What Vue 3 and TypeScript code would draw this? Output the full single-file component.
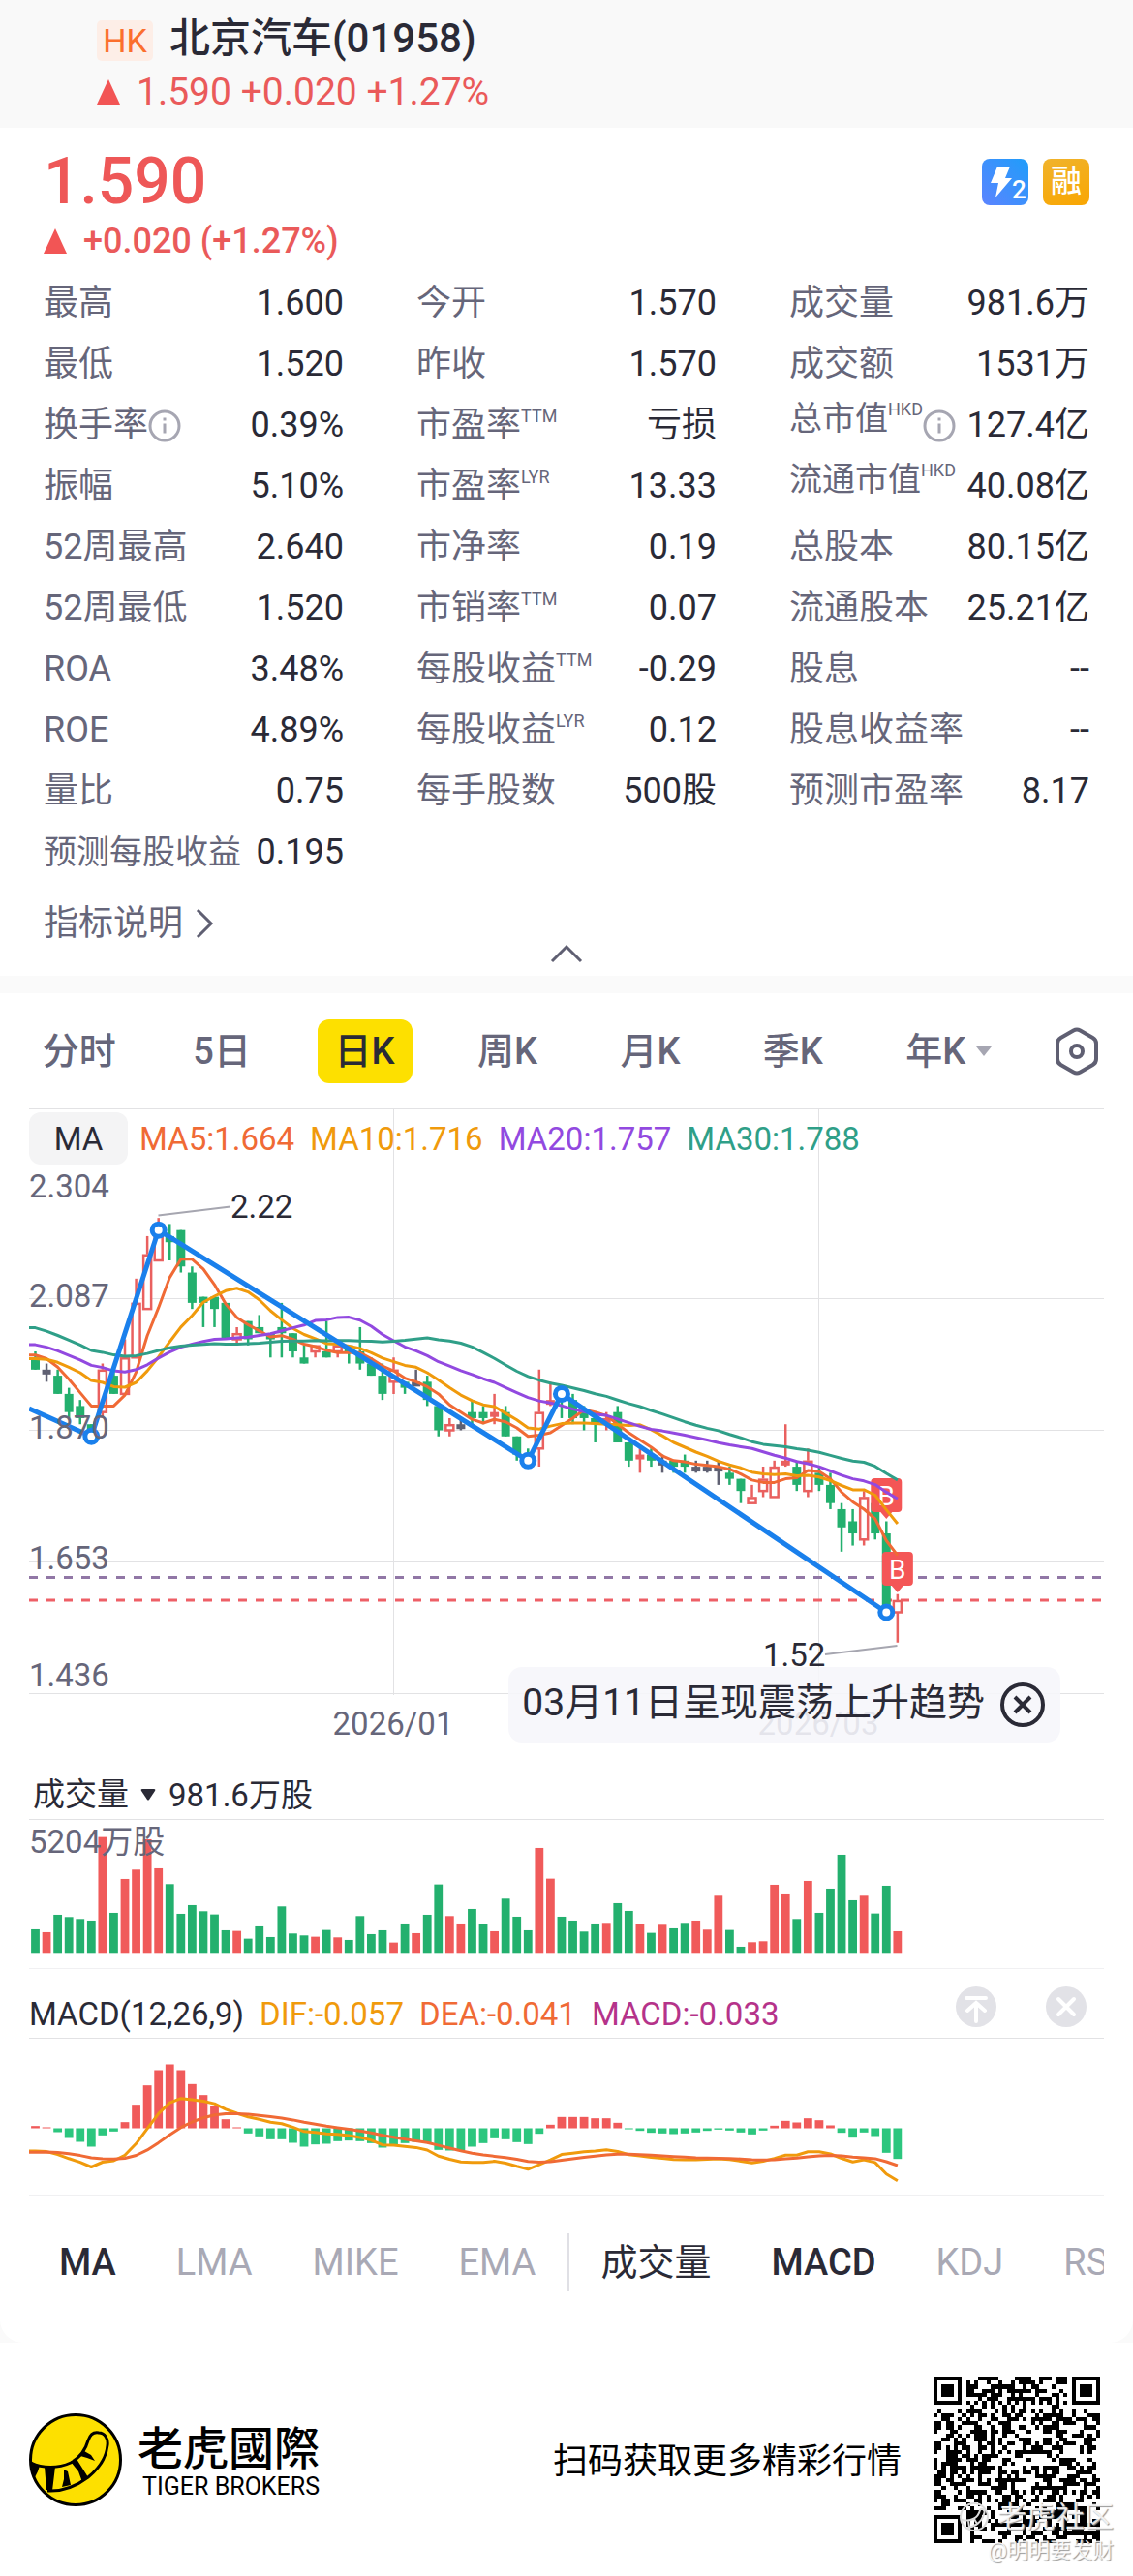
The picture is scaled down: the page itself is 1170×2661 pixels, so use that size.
<script setup lang="ts">
type Kind = 'u' | 'd' | 'f'
type Candle = [Kind, number, number, number, number]

interface Stat {
  label: string
  value: string
  sup?: string
  info?: boolean
  compact?: boolean
  raised?: boolean
}

const stats: Stat[] = [
  { label: '最高', value: '1.600' },
  { label: '今开', value: '1.570' },
  { label: '成交量', value: '981.6万' },
  { label: '最低', value: '1.520' },
  { label: '昨收', value: '1.570' },
  { label: '成交额', value: '1531万' },
  { label: '换手率', value: '0.39%', info: true },
  { label: '市盈率', value: '亏损', sup: 'TTM' },
  { label: '总市值', value: '127.4亿', sup: 'HKD', info: true, compact: true, raised: true },
  { label: '振幅', value: '5.10%' },
  { label: '市盈率', value: '13.33', sup: 'LYR' },
  { label: '流通市值', value: '40.08亿', sup: 'HKD', compact: true, raised: true },
  { label: '52周最高', value: '2.640' },
  { label: '市净率', value: '0.19' },
  { label: '总股本', value: '80.15亿' },
  { label: '52周最低', value: '1.520' },
  { label: '市销率', value: '0.07', sup: 'TTM' },
  { label: '流通股本', value: '25.21亿' },
  { label: 'ROA', value: '3.48%' },
  { label: '每股收益', value: '-0.29', sup: 'TTM' },
  { label: '股息', value: '--' },
  { label: 'ROE', value: '4.89%' },
  { label: '每股收益', value: '0.12', sup: 'LYR' },
  { label: '股息收益率', value: '--' },
  { label: '量比', value: '0.75' },
  { label: '每手股数', value: '500股' },
  { label: '预测市盈率', value: '8.17' },
  { label: '预测每股收益', value: '0.195', compact: true },
]

const periods = ['分时', '5日', '日K', '周K', '月K', '季K']

// kind (up / down / flat), open, close, high, low — in cents
const candles: Candle[] = [
  ['d', 199, 197, 200, 197], ['f', 197, 197, 198, 195], ['d', 196, 193, 197, 193], ['d', 193, 190, 194, 189],
  ['d', 191, 189, 192, 188], ['d', 188, 186, 188, 186], ['u', 190, 197, 198, 189], ['d', 196, 193, 197, 193],
  ['u', 193, 199, 202, 193], ['u', 199, 208, 212, 199], ['u', 207, 216, 219, 207], ['u', 215, 220, 222, 215],
  ['d', 219, 218, 221, 215], ['d', 220, 214, 220, 213], ['d', 213, 208, 214, 207], ['d', 209, 208, 209, 204],
  ['d', 209, 207, 209, 204], ['d', 208, 202, 208, 202], ['u', 202, 203, 204, 201], ['d', 205, 202, 205, 201],
  ['d', 204, 203, 206, 203], ['d', 203, 202, 203, 199], ['d', 204, 203, 208, 199], ['d', 203, 200, 203, 199],
  ['d', 199, 198, 201, 198], ['u', 200, 201, 201, 199], ['d', 200, 199, 205, 199], ['u', 200, 201, 201, 199],
  ['d', 201, 200, 201, 198], ['d', 200, 198, 204, 197], ['d', 198, 196, 199, 196], ['d', 196, 193, 198, 192],
  ['u', 195, 197, 199, 193], ['d', 195, 194, 195, 193], ['f', 195, 195, 197, 195], ['d', 195, 192, 196, 191],
  ['d', 191, 187, 191, 186], ['u', 187, 188, 189, 186], ['f', 188, 188, 189, 187], ['d', 190, 189, 192, 188],
  ['d', 190, 189, 191, 188], ['u', 190, 190, 193, 188], ['d', 190, 186, 191, 186], ['d', 186, 183, 186, 182],
  ['d', 183, 182, 184, 181], ['u', 184, 190, 197, 181], ['u', 192, 192, 195, 191], ['d', 193, 192, 194, 189],
  ['d', 192, 189, 193, 188], ['d', 190, 189, 191, 187], ['d', 189, 188, 190, 185], ['u', 189, 189, 190, 187],
  ['d', 190, 185, 191, 185], ['d', 185, 182, 185, 181], ['u', 183, 183, 184, 180], ['d', 183, 182, 184, 181],
  ['f', 182, 182, 183, 180], ['d', 182, 181, 182, 180], ['d', 182, 181, 183, 180], ['f', 181, 181, 182, 180],
  ['f', 181, 181, 182, 180], ['f', 181, 181, 182, 178], ['d', 180, 179, 181, 178], ['d', 179, 177, 179, 175],
  ['u', 175, 176, 178, 175], ['u', 177, 179, 181, 176], ['u', 176, 181, 182, 176], ['u', 182, 182, 188, 181],
  ['d', 181, 178, 182, 177], ['u', 177, 182, 184, 176], ['d', 180, 178, 181, 177], ['d', 178, 175, 180, 174],
  ['d', 174, 171, 175, 167], ['d', 172, 170, 174, 168], ['u', 169, 176, 177, 168], ['d', 175, 170, 176, 169],
  ['d', 170, 157, 172, 157], ['u', 157, 159, 160, 152],
]

// closes of the sessions before the visible window, oldest first
const history = [
  214, 214, 213, 213, 213, 206, 206, 206, 205, 205, 205, 205, 205, 204, 204,
  204, 204, 203, 200, 200, 198, 198, 198, 198, 199, 200, 200, 200, 200,
]

const volumes = [
  73, 64, 118, 111, 105, 100, 359, 124, 229, 258, 352, 262, 213, 121, 148, 129, 119, 70, 68, 44,
  82, 49, 144, 60, 54, 50, 71, 48, 40, 114, 58, 70, 32, 91, 61, 118, 212, 114, 91, 136,
  88, 67, 168, 112, 70, 325, 230, 112, 100, 66, 91, 93, 154, 130, 88, 62, 87, 76, 93, 100,
  72, 177, 71, 19, 33, 36, 211, 184, 105, 223, 124, 199, 304, 163, 177, 122, 208, 67,
]

const macd = [
  7, 3, -12, -30, -42, -57, -22, -10, 19, 73, 133, 180, 198, 180, 137, 103, 70, 28, 3, -16,
  -25, -34, -34, -45, -57, -50, -48, -40, -38, -40, -46, -60, -50, -46, -42, -46, -67, -69, -68, -57,
  -46, -31, -34, -43, -49, -17, 11, 35, 35, 35, 31, 31, 17, -2, -8, -14, -16, -18, -16, -13,
  -8, -4, -7, -13, -19, -7, 8, 23, 18, 31, 25, 9, -14, -29, -13, -24, -76, -95,
]

const STEP = 11.563
const GREEN = '#23b06e'
const RED = '#f05a5a'
const GREY = '#5f6072'

const x = (i: number): number => 6.5 + i * STEP
const y = (cents: number): number => 60.5 + (230.4 - cents) * 6.267
const strokeOf = (k: Kind): string => (k === 'u' ? '#e9605f' : k === 'd' ? GREEN : GREY)

const bodies = candles.map(([kind, open, close, high, low], i) => {
  const hollow = kind === 'u' && open !== close
  const top = y(Math.max(open, close))
  const height = Math.max(Math.abs(open - close) * 6.267, 5)
  return {
    key: i,
    cx: x(i),
    hollow,
    color: strokeOf(kind),
    top,
    bottom: top + height,
    height,
    high: y(high),
    low: y(low),
  }
})

const closes = [...history, ...candles.map((c) => c[2])]
const average = (span: number): string =>
  [-1, ...candles.keys()]
    .map((i) => {
      const end = Math.max(i, 0) + history.length + 1
      const sum = closes.slice(end - span, end).reduce((a, b) => a + b, 0)
      return `${(i < 0 ? 0 : x(i)).toFixed(1)},${y(sum / span).toFixed(1)}`
    })
    .join(' ')

const averages = [
  { name: 'MA5:1.664', color: '#f06a35', points: average(5) },
  { name: 'MA10:1.716', color: '#f09a0c', points: average(10) },
  { name: 'MA20:1.757', color: '#9249e0', points: average(20) },
  { name: 'MA30:1.788', color: '#2f9f88', points: average(30) },
]

const pivots = [
  { i: 5, p: 186 },
  { i: 11, p: 220 },
  { i: 44, p: 182 },
  { i: 47, p: 193 },
  { i: 76, p: 157 },
].map(({ i, p }) => ({ x: x(i), y: y(p) }))
const trend = ['0,310', ...pivots.map((p) => `${p.x},${p.y}`)].join(' ')

const priceLabels = [
  { text: '2.304', y: 92 },
  { text: '2.087', y: 205 },
  { text: '1.870', y: 341 },
  { text: '1.653', y: 476 },
  { text: '1.436', y: 597 },
]

const buys = [
  { x: x(76), y: 382 },
  { x: x(77), y: 458 },
]

const volumeBars = volumes.map((v, i) => ({
  key: i,
  x: x(i) - 4.4,
  h: v / 3,
  color: candles[i][0] === 'd' ? GREEN : RED,
}))

const ZERO = 93.5
let signal = -75
const deaPoints: string[] = []
const difPoints: string[] = []
const macdBars = macd.map((m, i) => {
  signal += m / 8
  const dea = (ZERO - signal / 3).toFixed(1)
  const dif = (ZERO - (signal + m / 2) / 3).toFixed(1)
  if (i === 0) {
    deaPoints.push(`0,${dea}`)
    difPoints.push(`0,${dif}`)
  }
  deaPoints.push(`${x(i).toFixed(1)},${dea}`)
  difPoints.push(`${x(i).toFixed(1)},${dif}`)
  const h = Math.max(Math.abs(m) / 3, 1)
  return { key: i, x: x(i) - 4.4, y: m > 0 ? ZERO - h : ZERO, h, color: m > 0 ? RED : '#2cc67e' }
})

const mainIndicators = ['MA', 'LMA', 'MIKE', 'EMA']
const subIndicators = ['成交量', 'MACD', 'KDJ', 'RSI']
const activeIndicators = ['MA', '成交量', 'MACD']

const SIZE = 41
const ring = (r: number, c: number, r0: number, c0: number, half: number): number | null => {
  const d = Math.max(Math.abs(r - r0), Math.abs(c - c0))
  return d <= half ? d : null
}
const isDark = (r: number, c: number): boolean => {
  for (const [r0, c0] of [[3, 3], [3, SIZE - 4], [SIZE - 4, 3]]) {
    const d = ring(r, c, r0, c0, 4)
    if (d !== null) return d === 3 || d <= 1
  }
  const a = ring(r, c, SIZE - 7, SIZE - 7, 2)
  if (a !== null) return a !== 1
  if (r === 6) return c % 2 === 0
  if (c === 6) return r % 2 === 0
  let h = Math.imul(r * 73 + 11, 2654435761) ^ Math.imul(c * 151 + 7, 1597334677)
  h = Math.imul(h ^ (h >>> 15), 2246822519)
  h ^= h >>> 13
  return (h & 255) < 130
}
let qrPath = ''
for (let r = 0; r < SIZE; r++) {
  for (let c = 0; c < SIZE; c++) {
    if (isDark(r, c)) qrPath += `M${c} ${r}h1v1h-1z`
  }
}
</script>

<template>
  <div class="page">
    <header class="topbar">
      <div class="topbar-title">
        <span class="market">HK</span>
        <h1>北京汽车(01958)</h1>
      </div>
      <div class="topbar-quote">
        <svg class="triangle" viewBox="0 0 24 26"><path d="M12 0 24 26H0z" fill="#f25555" /></svg>
        <span>1.590 +0.020 +1.27%</span>
      </div>
    </header>

    <section class="quote">
      <div class="price-row">
        <strong class="price">1.590</strong>
        <div class="badges">
          <svg viewBox="0 0 48 48" class="badge" role="img" aria-label="Level 2">
            <defs>
              <linearGradient id="blue" x1="0" y1="1" x2="1" y2="0">
                <stop offset="0" stop-color="#5c84ff" />
                <stop offset="1" stop-color="#1f9dfa" />
              </linearGradient>
            </defs>
            <rect width="48" height="48" rx="8" fill="url(#blue)" />
            <path d="M16 8h13l-5 12h7L14 40l3-15H9z" fill="#fff" />
            <text x="31" y="41" class="badge-num">2</text>
          </svg>
          <span class="badge badge-margin">融</span>
        </div>
      </div>
      <div class="change">
        <svg class="triangle" viewBox="0 0 24 26"><path d="M12 0 24 26H0z" fill="#f25555" /></svg>
        <span>+0.020 (+1.27%)</span>
      </div>

      <dl class="stats">
        <div v-for="(s, i) in stats" :key="i" class="stat">
          <dt :class="{ compact: s.compact }">
            <span :class="{ raised: s.raised }">{{ s.label }}<sup v-if="s.sup">{{ s.sup }}</sup></span>
            <svg v-if="s.info" class="info" viewBox="0 0 34 34">
              <circle cx="17" cy="17" r="15" />
              <path d="M17 14.500v10M17 8.500v3" />
            </svg>
          </dt>
          <dd>{{ s.value }}</dd>
        </div>
      </dl>

      <a class="explain" href="#">
        指标说明
        <svg viewBox="0 0 20 34"><path d="M3 3 17 17 3 31" /></svg>
      </a>
      <button class="collapse" type="button" aria-label="收起">
        <svg viewBox="0 0 34 20"><path d="M2 18 17 3 32 18" /></svg>
      </button>
    </section>

    <section class="card">
      <nav class="periods">
        <div v-for="p in periods" :key="p" class="period-cell">
          <button type="button" class="period" :class="{ active: p === '日K' }">{{ p }}</button>
        </div>
        <div class="period-cell">
          <button type="button" class="period period-more" aria-haspopup="listbox">
            年K
            <svg viewBox="0 0 18 12"><path d="M1 1h16L9 11z" /></svg>
          </button>
        </div>
        <button type="button" class="settings" aria-label="设置">
          <svg viewBox="0 0 48 50">
            <path d="M20.500 3.500q3.500-2 7 0l13 7.500q3.500 2 3.500 6v16q0 4-3.500 6l-13 7.500q-3.500 2-7 0l-13-7.500q-3.500-2-3.500-6V17q0-4 3.500-6z" />
            <circle cx="24" cy="25" r="6" />
          </svg>
        </button>
      </nav>

      <div class="chart-area">
        <div class="price-chart">
          <svg class="plot" viewBox="0 0 1110 684">
            <g class="grid">
              <path d="M0 .5H1110M0 60.500H1110M0 196.500H1110M0 332.500H1110M0 468.500H1110M0 604.500H1110" />
              <path d="M376.500 0V606M815.500 0V606" />
            </g>
            <path d="M0 484.500H1110" class="dash" stroke="#9177a6" />
            <path d="M0 508H1110" class="dash" stroke="#ee5f66" />
            <g v-for="b in bodies" :key="b.key">
              <template v-if="b.hollow">
                <path :d="`M${b.cx} ${b.high}V${b.top}M${b.cx} ${b.bottom}V${b.low}`" :stroke="b.color" stroke-width="2.500" />
                <rect :x="b.cx - 4" :y="b.top + 1" width="8" :height="b.height - 1" fill="#fff" :stroke="b.color" stroke-width="2.500" />
              </template>
              <template v-else>
                <path :d="`M${b.cx} ${b.high}V${b.low}`" :stroke="b.color" stroke-width="2.500" />
                <rect :x="b.cx - 4.5" :y="b.top" width="9" :height="b.height" :fill="b.color" />
              </template>
            </g>
            <g v-for="b in buys" :key="b.x">
              <path :d="`M${b.x - 12} ${b.y}h24q4 0 4 4v27q0 4-4 4h-6l-6 7-6-7h-6q-4 0-4-4v-27q0-4 4-4z`" fill="#f45656" />
              <text :x="b.x" :y="b.y + 28" class="buy">B</text>
            </g>
            <polyline v-for="a in averages" :key="a.name" :points="a.points" :stroke="a.color" class="line" />
            <polyline :points="trend" class="trend" />
            <circle v-for="p in pivots" :key="p.x" :cx="p.x" :cy="p.y" r="6.500" class="pivot" />
            <text v-for="l in priceLabels" :key="l.text" x="0" :y="l.y" class="axis">{{ l.text }}</text>
            <path d="M133.500 110.500 208 101.500M822 564 896.500 555" class="leader" />
            <text x="208" y="113" class="axis dark">2.22</text>
            <text x="758" y="576" class="axis dark">1.52</text>
            <text x="376" y="647" class="axis middle">2026/01</text>
            <text x="815" y="647" class="axis middle">2026/03</text>
          </svg>
          <div class="legend">
            <button type="button" class="legend-main">MA</button>
            <span v-for="a in averages" :key="a.name" :style="{ color: a.color }">{{ a.name }}</span>
          </div>
          <div class="toast">
            <span>03月11日呈现震荡上升趋势</span>
            <button type="button" aria-label="关闭">
              <svg viewBox="0 0 46 46">
                <circle cx="23" cy="23" r="21" />
                <path d="M15 15 31 31M31 15 15 31" />
              </svg>
            </button>
          </div>
        </div>

        <div class="volume-head">
          <button type="button">
            成交量
            <svg viewBox="0 0 16 12"><path d="M2 0h12q2 0 1 2L9 11q-1 1-2 0L1 2Q0 0 2 0z" /></svg>
          </button>
          <span>981.6万股</span>
        </div>
        <svg class="plot" viewBox="0 0 1110 155">
          <path d="M0 .5H1110" class="rule" />
          <rect v-for="b in volumeBars" :key="b.key" :x="b.x" :y="138.300 - b.h" width="8.800" :height="b.h" :fill="b.color" />
          <text x="0" y="35" class="axis">5204万股</text>
          <path d="M0 154.500H1110" class="rule faint" />
        </svg>

        <div class="macd-head">
          <div class="macd-values">
            <span>MACD(12,26,9)</span>
            <span class="dif">DIF:-0.057</span>
            <span class="dea">DEA:-0.041</span>
            <span class="bar">MACD:-0.033</span>
          </div>
          <div class="macd-tools">
            <button type="button" aria-label="置顶">
              <svg viewBox="0 0 42 42">
                <circle cx="21" cy="21" r="21" />
                <path d="M11 12h20M21 36V17M12 25l9-8 9 8" />
              </svg>
            </button>
            <button type="button" aria-label="移除">
              <svg viewBox="0 0 42 42">
                <circle cx="21" cy="21" r="21" />
                <path d="M13 13 29 29M29 13 13 29" />
              </svg>
            </button>
          </div>
        </div>
        <svg class="plot" viewBox="0 0 1110 163">
          <path d="M0 .5H1110" class="rule" />
          <rect v-for="b in macdBars" :key="b.key" :x="b.x" :y="b.y" width="8.800" :height="b.h" :fill="b.color" />
          <polyline :points="difPoints.join(' ')" class="line" stroke="#f09a0c" />
          <polyline :points="deaPoints.join(' ')" class="line" stroke="#f06a35" />
          <path d="M0 162.500H1110" class="rule faint" />
        </svg>

        <nav class="indicators">
          <button v-for="n in mainIndicators" :key="n" type="button" :class="{ on: activeIndicators.includes(n) }">{{ n }}</button>
          <i class="split"></i>
          <button
            v-for="n in subIndicators"
            :key="n"
            type="button"
            :class="{ on: activeIndicators.includes(n), han: n === '成交量' }"
          >{{ n }}</button>
        </nav>
      </div>
    </section>

    <footer class="footer">
      <svg class="logo" viewBox="0 0 96 96">
        <circle cx="48" cy="48" r="46.500" fill="#fde000" stroke="#000" stroke-width="3" />
        <path d="M2 51C14 57 30 57 43 51 54 45 59 35 61 28c2-6 6-9 11-8 6 0 10 6 9 13-1 12-9 24-20 33-12 9-26 15-42 14" fill="none" stroke="#000" stroke-width="3" />
        <path d="M2 50 11 54 9 60 5 68zM16 55h11l-3 25-6-1zM36 58l4 2 3 14-9 2 2-8zM43 50l6-3 12 19-6 5-4-11zM53 44l4-5 7 4 4 6-8-3z" />
      </svg>
      <div class="brand">
        <strong>老虎國際</strong>
        <span>TIGER BROKERS</span>
      </div>
      <p>扫码获取更多精彩行情</p>
      <div class="qr">
        <svg viewBox="0 0 41 41" shape-rendering="crispEdges" role="img" aria-label="二维码"><path :d="qrPath" /></svg>
        <div class="stamp">
          <div class="stamp-brand">
            <svg viewBox="0 0 32 32">
              <circle cx="16" cy="16" r="14" />
              <path d="M3 19c10 2 17-2 19-10 2-3 6 0 4 4-2 8-9 13-17 14M10 20l1 6M16 18l3 5" />
            </svg>
            <span>老虎社区</span>
          </div>
          <div class="stamp-user">@明明要发财</div>
        </div>
      </div>
    </footer>
  </div>
</template>

<style>
body {
  margin: 0;
  background: #fafafa;
}
</style>

<style scoped>
.page {
  font-family: Roboto, "Noto Sans CJK SC", sans-serif;
  color: #2a2a36;
  font-size: 36px;
  overflow: hidden;
}

button {
  font: inherit;
  color: inherit;
  background: none;
  border: 0;
  padding: 0;
  margin: 0;
}

svg {
  display: block;
}

.topbar {
  height: 132px;
  box-sizing: border-box;
  padding: 14px 100px 0;
  background: #f9f9f9;
}

.topbar-title {
  display: flex;
  align-items: center;
  gap: 17px;
  height: 52px;
}

.market {
  width: 58px;
  height: 42px;
  line-height: 42px;
  margin-top: 4px;
  border-radius: 5px;
  background: #fdeee7;
  color: #fb6f2d;
  font-size: 34px;
  text-align: center;
}

h1 {
  margin: 0;
  font-size: 42px;
  line-height: 52px;
  font-weight: 500;
}

.topbar-quote {
  display: flex;
  align-items: center;
  gap: 17px;
  line-height: 58px;
  font-size: 39px;
  color: #ea5a5a;
}

.triangle {
  width: 24px;
  height: 26px;
}

.quote {
  background: #fff;
  padding: 20px 45px 13px;
}

.price-row {
  display: flex;
  align-items: center;
  justify-content: space-between;
  height: 72px;
}

.price {
  font-size: 66px;
  line-height: 72px;
  font-weight: 500;
  color: #ee5757;
}

.badges {
  display: flex;
  gap: 15px;
}

.badge {
  width: 48px;
  height: 48px;
}

.badge-num {
  font-size: 26px;
  font-weight: 500;
  fill: #fff;
}

.badge-margin {
  border-radius: 8px;
  background: linear-gradient(160deg, #f0b32c, #f9a602);
  color: #fff;
  font-size: 32px;
  font-weight: 500;
  line-height: 46px;
  text-align: center;
}

.change {
  display: flex;
  align-items: center;
  gap: 17px;
  line-height: 50px;
  font-weight: 500;
  color: #ea5a5a;
}

.stats {
  display: grid;
  grid-template-columns: repeat(3, 1fr);
  column-gap: 75px;
  margin: 8px 0 0;
}

.stat {
  display: flex;
  justify-content: space-between;
  line-height: 63px;
  height: 63px;
  white-space: nowrap;
}

dt {
  display: flex;
  align-items: center;
  color: #66667a;
}

dt.compact {
  font-size: 34px;
}

dt sup {
  font-size: 18px;
  line-height: 18px;
  vertical-align: 15px;
}

.raised {
  margin-top: -14px;
}

.info {
  width: 34px;
  height: 34px;
  fill: none;
  stroke: #a6a6b2;
  stroke-width: 3;
}

dd {
  margin: 0;
}

.explain {
  display: flex;
  align-items: center;
  gap: 12px;
  width: max-content;
  margin-top: 21px;
  line-height: 42px;
  color: #66667a;
  text-decoration: none;
}

.explain svg {
  width: 20px;
  height: 34px;
  fill: none;
  stroke: #5f5f72;
  stroke-width: 3;
}

.collapse {
  display: block;
  margin: 0 auto;
}

.collapse svg {
  width: 34px;
  height: 20px;
  fill: none;
  stroke: #5f5f72;
  stroke-width: 3;
}

.card {
  margin-top: 18px;
  background: #fff;
  border-radius: 0 0 24px 24px;
}

.periods {
  display: flex;
  align-items: center;
  padding: 27px 34px 26px 8px;
}

.period-cell {
  flex: 1 1 0;
  min-width: 0;
  display: flex;
  justify-content: center;
}

.period {
  height: 66px;
  padding: 0 18px;
  border-radius: 12px;
  font-size: 38px;
  line-height: 66px;
  font-weight: 500;
  color: #66667a;
  white-space: nowrap;
}

.period.active {
  background: #fde000;
  color: #2a2a36;
}

.period.period-more {
  display: flex;
  align-items: center;
  gap: 10px;
  margin-left: 28px;
  padding: 0;
}

.period-more svg {
  width: 18px;
  height: 12px;
  fill: #a6a6b2;
}

.settings {
  margin-left: 48px;
}

.settings svg {
  width: 48px;
  height: 50px;
  fill: none;
  stroke: #5f5f72;
  stroke-width: 4;
}

.chart-area {
  padding: 0 30px;
}

.plot {
  width: 100%;
  height: auto;
}

.price-chart {
  position: relative;
  display: grid;
}

.price-chart > .plot,
.legend {
  grid-area: 1 / 1;
}

.grid path,
.rule {
  stroke: #e2e2e4;
  fill: none;
}

.rule.faint {
  stroke: #f0f0f2;
}

.dash {
  stroke-width: 3;
  stroke-dasharray: 9 9;
}

.line {
  fill: none;
  stroke-width: 3;
  stroke-linejoin: round;
}

.trend {
  fill: none;
  stroke: #1a80ec;
  stroke-width: 5;
}

.pivot {
  fill: #fff;
  stroke: #1a80ec;
  stroke-width: 5;
}

.leader {
  fill: none;
  stroke: #a6a6b0;
  stroke-width: 2;
}

.buy {
  fill: #fff;
  font-size: 28px;
  text-anchor: middle;
}

.axis {
  font-size: 33px;
  fill: #66667a;
}

.axis.dark {
  fill: #2a2a36;
}

.axis.middle {
  text-anchor: middle;
}

.legend {
  align-self: start;
  display: flex;
  gap: 16px;
  padding-top: 4px;
  font-size: 33px;
  line-height: 56px;
}

.legend-main {
  width: 102px;
  height: 54px;
  margin-right: -4px;
  border-radius: 12px;
  background: #f4f4f5;
}

.toast {
  position: absolute;
  right: 45px;
  bottom: 29px;
  display: flex;
  align-items: center;
  gap: 16px;
  height: 78px;
  padding: 0 16px 0 14px;
  border-radius: 14px;
  background: rgba(246, 246, 251, 0.88);
  font-size: 39px;
  line-height: 50px;
  white-space: nowrap;
}

.toast span {
  padding-bottom: 4px;
}

.toast svg {
  width: 46px;
  height: 46px;
  fill: none;
  stroke: #2a2a36;
  stroke-width: 4;
}

.volume-head {
  display: flex;
  gap: 13px;
  height: 50px;
  padding-left: 4px;
  font-size: 33px;
  line-height: 52px;
}

.volume-head button {
  display: flex;
  align-items: center;
  gap: 12px;
}

.volume-head svg {
  width: 16px;
  height: 12px;
  fill: #2a2a36;
}

.macd-head {
  display: flex;
  justify-content: space-between;
  height: 53px;
  padding-top: 18px;
  font-size: 33px;
}

.macd-values {
  display: flex;
  gap: 16px;
  line-height: 58px;
}

.dif {
  color: #f09a0c;
}

.dea {
  color: #f06a35;
}

.bar {
  color: #b5338a;
}

.macd-tools {
  display: flex;
  align-items: flex-start;
  gap: 51px;
  padding-right: 18px;
}

.macd-tools svg {
  width: 42px;
  height: 42px;
  fill: #e2e2e7;
  stroke-linecap: round;
}

.macd-tools path {
  fill: none;
  stroke: #fff;
  stroke-width: 4;
}

.indicators {
  display: flex;
  overflow: hidden;
  padding: 39px 0 53px;
  font-size: 38px;
  line-height: 60px;
  color: #a9a9b5;
}

.indicators button {
  flex: none;
  padding: 0 31px;
}

.indicators .on {
  color: #2a2a36;
  font-weight: 500;
}

.indicators .han {
  font-weight: 400;
}

.split {
  flex: none;
  width: 3px;
  margin: 0 1px;
  background: #e0e0e5;
}

.footer {
  display: flex;
  align-items: center;
  padding: 35px 34px 34px 30px;
  background: #fff;
  color: #000;
}

.logo {
  width: 96px;
  height: 96px;
}

.brand {
  display: flex;
  flex-direction: column;
  align-items: flex-end;
  margin-left: 16px;
}

.brand strong {
  font-family: "Noto Sans CJK TC", sans-serif;
  font-size: 47px;
  line-height: 56px;
  font-weight: 500;
}

.brand span {
  font-size: 25px;
  line-height: 30px;
}

.footer p {
  margin: 0 33px 4px auto;
}

.qr {
  position: relative;
}

.qr > svg {
  width: 172px;
  height: 172px;
}

.stamp {
  position: absolute;
  right: -14px;
  bottom: -24px;
  display: flex;
  flex-direction: column;
  align-items: flex-end;
  color: rgba(255, 255, 255, 0.85);
  text-shadow: 1px 1px 1px #999;
  white-space: nowrap;
}

.stamp-brand {
  display: flex;
  align-items: center;
  gap: 8px;
  font-size: 30px;
  line-height: 38px;
}

.stamp-brand svg {
  width: 32px;
  height: 32px;
  fill: none;
  stroke: #ddd;
  stroke-width: 2;
}

.stamp-user {
  font-size: 22px;
  line-height: 32px;
}
</style>
